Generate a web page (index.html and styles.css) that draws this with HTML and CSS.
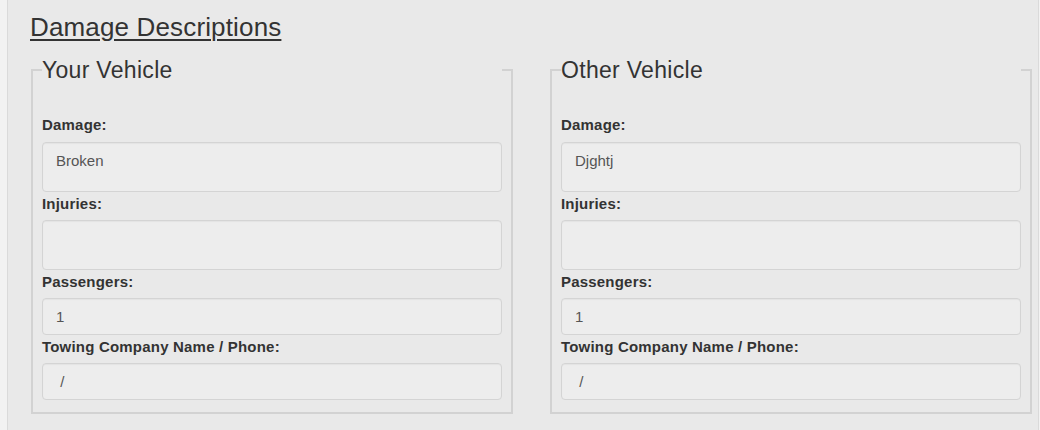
FILE: index.html
```html
<!DOCTYPE html>
<html>
<head>
<meta charset="utf-8">
<link rel="stylesheet" href="styles.css">
</head>
<body>
<div class="panel">
  <h2 class="title">Damage Descriptions</h2>
  <div class="cols">
    <fieldset class="box">
      <legend>Your Vehicle</legend>
      <label class="lbl first">Damage:</label>
      <textarea class="field area" readonly>Broken</textarea>
      <label class="lbl">Injuries:</label>
      <textarea class="field area" readonly></textarea>
      <label class="lbl">Passengers:</label>
      <input class="field line" type="text" value="1" readonly>
      <label class="lbl">Towing Company Name / Phone:</label>
      <input class="field line" type="text" value=" / " readonly>
    </fieldset>
    <fieldset class="box">
      <legend>Other Vehicle</legend>
      <label class="lbl first">Damage:</label>
      <textarea class="field area" readonly>Djghtj</textarea>
      <label class="lbl">Injuries:</label>
      <textarea class="field area" readonly></textarea>
      <label class="lbl">Passengers:</label>
      <input class="field line" type="text" value="1" readonly>
      <label class="lbl">Towing Company Name / Phone:</label>
      <input class="field line" type="text" value=" / " readonly>
    </fieldset>
  </div>
</div>
</body>
</html>
```

FILE: styles.css
```css
html, body {
  margin: 0;
  padding: 0;
  background: #f2f2f2;
  font-family: "Liberation Sans", Arial, sans-serif;
  color: #333;
  overflow: hidden;
}

.panel {
  margin-left: 7px;
  width: 1032px;
  box-sizing: border-box;
  min-height: 460px;
  background: #e9e9e9;
  border-left: 1px solid #dadada;
  border-right: 1px solid #dadada;
  padding: 12px 6px 0 23px;
}

.title {
  margin: 0 0 15px -1px;
  font-size: 26px;
  line-height: 30px;
  font-weight: normal;
  letter-spacing: 0.15px;
  text-decoration: underline;
  text-decoration-thickness: 2px;
  text-underline-offset: 3px;
  color: #333;
}

.cols {
  display: grid;
  grid-template-columns: 482px 482px;
  column-gap: 37px;
}

.box {
  margin: 0;
  min-width: 0;
  padding: 30px 9px 12px 9px;
  border: 2px solid #d2d2d2;
  display: flex;
  flex-direction: column;
}

.box legend {
  width: 100%;
  box-sizing: border-box;
  padding: 0;
  font-size: 23px;
  line-height: 26px;
  letter-spacing: 0.3px;
  color: #333;
}

.lbl {
  display: block;
  font-size: 15px;
  line-height: 18px;
  font-weight: bold;
  letter-spacing: 0.2px;
  color: #333;
  margin: 3px 0 7px 0;
}

.lbl.first {
  margin-bottom: 8px;
}

.field {
  display: block;
  box-sizing: border-box;
  width: 460px;
  margin: 0;
  font-family: "Liberation Sans", Arial, sans-serif;
  font-size: 15px;
  color: #555;
  background: #ededed;
  border: 1px solid #d4d4d4;
  border-radius: 4px;
  box-shadow: inset 0 1px 1px rgba(0,0,0,0.04);
  outline: none;
}

.area {
  height: 50px;
  padding: 9px 13px;
  resize: none;
  overflow: hidden;
}

.line {
  height: 37px;
  padding: 0 13px;
}
```
